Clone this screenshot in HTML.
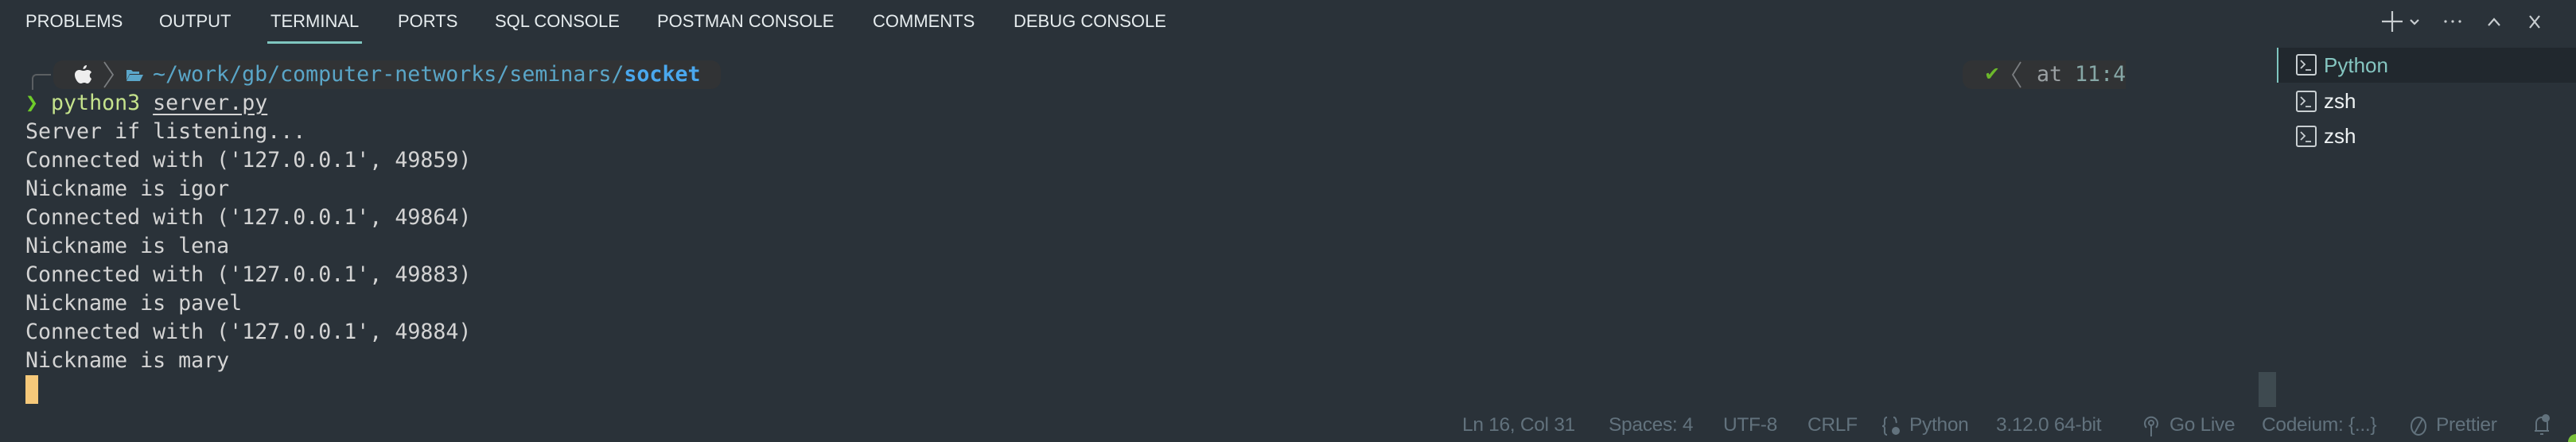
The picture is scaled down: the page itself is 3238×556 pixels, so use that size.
<!DOCTYPE html>
<html><head><meta charset="utf-8"><style>
*{margin:0;padding:0;box-sizing:border-box}
body{width:3238px;height:556px;background:#2a3239;position:relative;overflow:hidden;font-family:"Liberation Sans",sans-serif}
.a{position:absolute;white-space:pre}
.tab{position:absolute;top:13px;font-size:22px;color:#e6ecee;line-height:28px}
.mono{font-family:"DejaVu Sans Mono","Liberation Mono",monospace;font-size:26.6px;color:#d4d4d4;line-height:36px;letter-spacing:0}
.st{position:absolute;top:520px;font-size:24.5px;color:#62727d;line-height:30px;letter-spacing:-0.3px}
.tl{position:absolute;left:2921px;font-size:26px;line-height:32px;color:#eef2f3}
.ti{position:absolute;left:2886px;width:26px;height:27px;border:2px solid #c9cfd2;border-radius:3px}
</style></head><body>
<div class="tab" style="left:32px">PROBLEMS</div>
<div class="tab" style="left:200px">OUTPUT</div>
<div class="tab" style="left:340px">TERMINAL</div>
<div class="a" style="left:336px;top:52px;width:119px;height:3px;background:#7fc6c0"></div>
<div class="tab" style="left:500px">PORTS</div>
<div class="tab" style="left:622px">SQL CONSOLE</div>
<div class="tab" style="left:826px">POSTMAN CONSOLE</div>
<div class="tab" style="left:1097px">COMMENTS</div>
<div class="tab" style="left:1274px">DEBUG CONSOLE</div>

<svg class="a" style="left:2980px;top:8px" width="240" height="40" viewBox="0 0 240 40" fill="none" stroke="#c8cdd0" stroke-width="2.2">
<path d="M27 6v26M14 19h26"/><path d="M50 17l5 5 5-5"/>
<circle cx="94" cy="19" r="1.6" fill="#c8cdd0" stroke="none"/><circle cx="103" cy="19" r="1.6" fill="#c8cdd0" stroke="none"/><circle cx="112" cy="19" r="1.6" fill="#c8cdd0" stroke="none"/>
<path d="M148 24l7-8 7 8"/><path d="M200 12l12 15M212 12l-12 15"/>
</svg>

<div class="a" style="left:40px;top:93px;width:24px;height:20px;border-left:2px solid #5b5f62;border-top:2px solid #5b5f62;border-top-left-radius:6px"></div>
<div class="a" style="left:67px;top:76px;width:839px;height:36px;background:#313335;border-radius:12px"></div>
<svg class="a" style="left:92px;top:80px" width="26" height="28" viewBox="0 0 26 28"><path fill="#eeeeee" d="M17 2c0 3-2 5-4.5 5 0-3 2-5 4.5-5zM13 9c2 0 3-1 5-1 2 0 4 1 5 3-3 2-3 6 0 8-1 3-3 6-5 6-2 0-2-1-4-1s-3 1-4.5 1C6 25 2 19 2 14c0-4 3-6 5.5-6 2 0 3.5 1 5.5 1z"/></svg>
<svg class="a" style="left:128px;top:76px" width="18" height="36"><path d="M3 2l11 16-11 16" stroke="#7a7d80" stroke-width="1.8" fill="none"/></svg>
<svg class="a" style="left:158px;top:86px" width="22" height="17" viewBox="0 0 22 17"><path fill="#5ba6c9" d="M1 2h6l2 2h8v3H5L1 15zM5 8h17l-4 8H1z"/></svg>
<div class="a mono" style="left:192px;top:76px;color:#5aa6c8">~/work/gb/computer-networks/seminars/<b style="color:#4aa8ee">socket</b></div>

<div class="a" style="left:2467px;top:76px;width:205px;height:36px;background:#313335;border-radius:12px 0 0 12px"></div>
<div class="a" style="left:2494px;top:76px;color:#6cb82b;font-size:24px;line-height:36px">✔</div>
<svg class="a" style="left:2526px;top:76px" width="18" height="36"><path d="M14 2L4 18l10 16" stroke="#7a7d80" stroke-width="1.8" fill="none"/></svg>
<div class="a mono" style="left:2560px;top:76px;color:#9aa0a3">at <span style="color:#86a7a6">11:4</span></div>

<div class="a mono" style="left:32px;top:112px"><span style="color:#6fcc2a">❯</span> <span style="color:#c5e38c">python3</span> <span style="text-decoration:underline;text-underline-offset:5px">server.py</span></div>
<div class="a mono" style="left:32px;top:148px">Server if listening...
Connected with ('127.0.0.1', 49859)
Nickname is igor
Connected with ('127.0.0.1', 49864)
Nickname is lena
Connected with ('127.0.0.1', 49883)
Nickname is pavel
Connected with ('127.0.0.1', 49884)
Nickname is mary</div>
<div class="a" style="left:32px;top:472px;width:16px;height:36px;background:#f6c97a"></div>

<div class="a" style="left:2862px;top:60px;width:376px;height:44px;background:#21282e;border-left:2px solid #7fc6c0"></div>
<div class="ti" style="top:68px"></div><div class="tl" style="top:66px;color:#85c6c1">Python</div>
<div class="ti" style="top:114px"></div><div class="tl" style="top:111px">zsh</div>
<div class="ti" style="top:158px"></div><div class="tl" style="top:155px">zsh</div>
<svg class="a" style="left:2886px;top:68px" width="28" height="120"><g stroke="#c9cfd2" stroke-width="1.8" fill="none"><path d="M6 8l5 5-5 5M12 20h7"/><path d="M6 54l5 5-5 5M12 66h7"/><path d="M6 98l5 5-5 5M12 110h7"/></g></svg>

<div class="a" style="left:2839px;top:468px;width:22px;height:44px;background:#3e4a50"></div>

<div class="st" style="left:1838px">Ln 16, Col 31</div>
<div class="st" style="left:2022px">Spaces: 4</div>
<div class="st" style="left:2166px">UTF-8</div>
<div class="st" style="left:2272px">CRLF</div>
<svg class="a" style="left:2364px;top:522px" width="26" height="28" fill="none" stroke="#62727d" stroke-width="2"><path d="M8 3C4 3 5 8 5 11S2 14 2 14s3 0 3 3-1 8 3 8"/><path d="M16 3c4 0 3 5 4 7"/><circle cx="19" cy="20" r="4" fill="#62727d"/></svg>
<div class="st" style="left:2400px">Python</div>
<div class="st" style="left:2509px">3.12.0 64-bit</div>
<svg class="a" style="left:2693px;top:522px" width="22" height="28" viewBox="0 0 22 28" fill="none" stroke="#62727d" stroke-width="2"><circle cx="11" cy="10" r="3"/><path d="M5 16a8 8 0 1 1 12 0M11 13v14"/></svg>
<div class="st" style="left:2727px">Go Live</div>
<div class="st" style="left:2843px">Codeium: {...}</div>
<svg class="a" style="left:3028px;top:523px" width="24" height="26" fill="none" stroke="#62727d" stroke-width="2"><ellipse cx="12" cy="13" rx="9" ry="11"/><path d="M17 4L7 22"/></svg>
<div class="st" style="left:3062px">Prettier</div>
<svg class="a" style="left:3183px;top:520px" width="24" height="30" fill="none" stroke="#62727d" stroke-width="2"><path d="M5 22V12a7 7 0 0 1 14 0v10zM3 22h18M10 26h4"/><circle cx="17" cy="6" r="4" fill="#62727d"/></svg>
<div class="a" style="left:3228px;top:546px;width:10px;height:10px;background:#7bc23a;border-top-left-radius:10px"></div>
</body></html>
